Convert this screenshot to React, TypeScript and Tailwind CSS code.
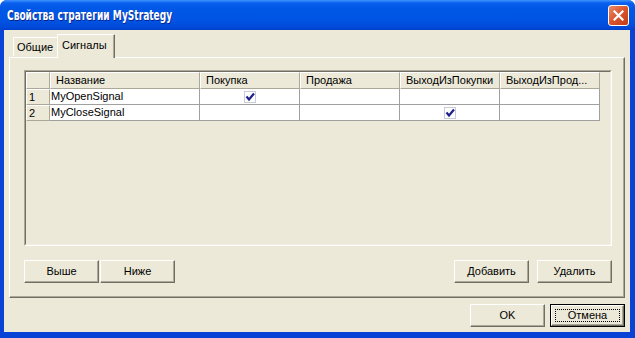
import { ReactNode } from "react";

// column headers of the signals grid
const columns = [
  { title: "Название", width: "w-[150px]" },
  { title: "Покупка", width: "w-[100px]" },
  { title: "Продажа", width: "w-[100px]" },
  { title: "ВыходИзПокупки", width: "w-[100px]" },
  { title: "ВыходИзПрод...", width: "w-[100px]" },
];

const rows = [
  { n: "1", name: "MyOpenSignal", checks: [true, false, false, false] },
  { n: "2", name: "MyCloseSignal", checks: [false, false, true, false] },
];

const CheckMark = () => (
  <svg width="12" height="12" viewBox="0 0 12 12">
    <rect x="0.5" y="0.5" width="11" height="11" fill="none" stroke="#c9c9dc" />
    <path d="M2.5 5.5 L5 8.5 L10 2.5" fill="none" stroke="#21218c" strokeWidth="2.2" />
  </svg>
);

const Button = ({ children, def = false, className = "" }: { children: ReactNode; def?: boolean; className?: string }) => (
  <div className={`w-[75px] h-[23px] ${def ? "border border-black" : ""} ${className}`}>
    <div className="w-full h-full bg-[#ECE9D8] border border-t-white border-l-white border-b-[#716F64] border-r-[#716F64] shadow-[inset_-1px_-1px_0_#ACA899] flex items-center justify-center">
      {def ? (
        <div className="w-[calc(100%-6px)] h-[calc(100%-6px)] border border-dotted border-black flex items-center justify-center">
          {children}
        </div>
      ) : (
        children
      )}
    </div>
  </div>
);

const App = () => {
  return (
    <div className="w-[635px] h-[338px] bg-white">
      <div
        className="w-[635px] h-[338px] rounded-t-[7px] bg-[#0843d6] flex flex-col text-black text-[11px]"
        style={{ fontFamily: '"Liberation Sans", Arial, sans-serif' }}
      >
        {/* TITLEBAR */}
        <div className="h-[30px] shrink-0 rounded-t-[7px] bg-[linear-gradient(to_bottom,#3d95ff_0px,#0a5fee_3px,#0058e6_8px,#0054e3_20px,#0048d8_28px,#003fc8_30px)] flex items-center pl-[7px] pr-[6px]">
          <span
            className="inline-block origin-left scale-x-[0.72] whitespace-nowrap text-white font-bold text-[14px] [text-shadow:1px_1px_0_#0a1e8c]"
            style={{ fontFamily: '"DejaVu Sans Condensed", "Liberation Sans", sans-serif' }}
          >
            Свойства стратегии MyStrategy
          </span>
          <div className="ml-auto w-[21px] h-[21px] rounded-[3px] border border-white bg-[linear-gradient(135deg,#e98b6e,#d9542b_50%,#c23c16)] flex items-center justify-center">
            <svg width="11" height="11" viewBox="0 0 11 11">
              <path d="M1.5 1.5 L9.5 9.5 M9.5 1.5 L1.5 9.5" stroke="white" strokeWidth="2.2" strokeLinecap="square" />
            </svg>
          </div>
        </div>

        {/* BODY */}
        <div className="flex-1 ml-[4px] mr-[5px] mb-[6px] bg-[#ECE9D8] flex flex-col">
          {/* TABS */}
          <div className="h-[27px] shrink-0 flex items-end pl-[9px]">
            <div className="w-[44px] h-[19px] border-t border-l border-t-white border-l-white flex items-center pl-[3px] mb-[1px]">
              Общие
            </div>
            <div className="relative z-10 w-[58px] h-[24px] bg-[#ECE9D8] border-t border-l border-r border-t-white border-l-white border-r-[#716F64] shadow-[inset_-1px_0_0_#ACA899] flex items-center pl-[4px] pb-[2px] mb-[-1px]">
              Сигналы
            </div>
          </div>

          {/* PANEL */}
          <div className="mx-[5px] h-[241px] shrink-0 border border-t-white border-l-white border-b-[#716F64] border-r-[#716F64] shadow-[inset_-1px_-1px_0_#ACA899] pt-[12px] pl-[14px]">
            {/* GRID */}
            <div className="w-[588px] h-[176px] border border-t-[#ACA899] border-l-[#ACA899] border-b-white border-r-white">
              <div className="w-full h-full border border-t-[#716F64] border-l-[#716F64] border-b-[#F1EFE2] border-r-[#F1EFE2] bg-[#ECE9D8]">
                <div className="flex h-[17px]">
                  <div className="w-[24px] border-t border-l border-t-white border-l-white border-r border-b border-r-[#ACA899] border-b-[#ACA899]" />
                  {columns.map((c) => (
                    <div
                      key={c.title}
                      className={`${c.width} border-t border-l border-t-white border-l-white border-r border-b border-r-[#ACA899] border-b-[#ACA899] flex items-center pl-[5px] whitespace-nowrap overflow-hidden`}
                    >
                      {c.title}
                    </div>
                  ))}
                </div>
                {rows.map((r) => (
                  <div key={r.n} className="flex h-[16px]">
                    <div className="w-[24px] border-t border-l border-t-white border-l-white border-r border-b border-r-[#ACA899] border-b-[#ACA899] flex items-center pl-[2px]">
                      {r.n}
                    </div>
                    <div className="w-[150px] bg-white border-r border-b border-[#A0A0A0] flex items-center pl-[1px]">
                      {r.name}
                    </div>
                    {r.checks.map((ch, i) => (
                      <div
                        key={i}
                        className="w-[100px] bg-white border-r border-b border-[#A0A0A0] flex items-center justify-center"
                      >
                        {ch && <CheckMark />}
                      </div>
                    ))}
                  </div>
                ))}
              </div>
            </div>

            {/* GRID BUTTONS */}
            <div className="w-[588px] mt-[14px] flex">
              <Button>Выше</Button>
              <Button className="ml-[1px]">Ниже</Button>
              <div className="flex-1" />
              <Button>Добавить</Button>
              <Button className="ml-[8px]">Удалить</Button>
            </div>
          </div>

          {/* DIALOG BUTTONS */}
          <div className="mt-[6px] flex justify-end gap-[5px] pr-[5px]">
            <Button>OK</Button>
            <Button def>Отмена</Button>
          </div>
        </div>
      </div>
    </div>
  );
};

export default App;
